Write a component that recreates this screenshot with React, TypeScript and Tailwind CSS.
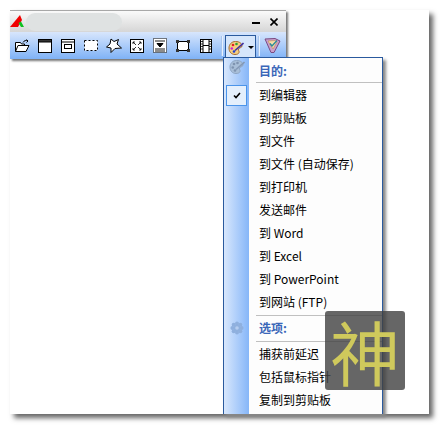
import React from "react";

const font = { fontFamily: '"Noto Sans CJK SC", sans-serif' };

const OpenIcon = () => (
	<svg width="16" height="14" viewBox="0 0 16 14" fill="none" stroke="#000">
		<path d="M1.5 12.5V3.5H6.5L7.5 5H10.5V6.5" fill="#fff" />
		<path d="M1.5 12.5L4 6.5H15L12 12.5Z" fill="#fff" />
		<path d="M9 3.5C10 1.5 12 1 14 2M14 2L12.5 0.5M14 2L12.5 3.5" />
	</svg>
);

const WindowIcon = () => (
	<svg width="14" height="14" viewBox="0 0 14 14" fill="#fff" stroke="#000">
		<rect x="0.5" y="0.5" width="13" height="13" />
		<rect x="0.5" y="0.5" width="13" height="2.5" fill="#333" />
	</svg>
);

const ObjectIcon = () => (
	<svg width="14" height="14" viewBox="0 0 14 14" fill="#fff" stroke="#000">
		<rect x="0.5" y="0.5" width="13" height="13" />
		<path d="M1 3H13" />
		<rect x="3.5" y="5.5" width="7" height="4" />
	</svg>
);

const RegionIcon = () => (
	<svg width="14" height="12" viewBox="0 0 14 12" fill="#fff" stroke="#000">
		<rect x="0.5" y="0.5" width="13" height="10" strokeDasharray="2 2" />
	</svg>
);

const FreeIcon = () => (
	<svg width="16" height="15" viewBox="0 0 16 15" fill="#fff" stroke="#000">
		<path d="M5 1L8 3.5L12.5 1.5L11 6L15.5 10L9 10.5L5 14.5L5 10L0.5 9L4 6Z" />
	</svg>
);

const FullIcon = () => (
	<svg width="14" height="14" viewBox="0 0 14 14" fill="#fff" stroke="#000">
		<rect x="0.5" y="0.5" width="13" height="13" />
		<path d="M3 3L6 6M3 3H5M3 3V5M11 3L8 6M11 3H9M11 3V5M3 11L6 8M3 11H5M3 11V9M11 11L8 8M11 11H9M11 11V9" strokeWidth="0.8" />
	</svg>
);

const ScrollIcon = () => (
	<svg width="14" height="15" viewBox="0 0 14 15" fill="#fff" stroke="#000">
		<rect x="0.5" y="0.5" width="13" height="14" strokeDasharray="1 1" />
		<path d="M2 3H12M2 11H12M2 13H12" strokeWidth="0.9" />
		<path d="M4 5.5H10L7 9Z" fill="#000" />
	</svg>
);

const FixedIcon = () => (
	<svg width="14" height="12" viewBox="0 0 14 12" fill="#fff" stroke="#000">
		<rect x="1.5" y="1.5" width="11" height="9" />
		<path d="M0 0H3V3H0ZM11 0H14V3H11ZM0 9H3V12H0ZM11 9H14V12H11Z" fill="#333" stroke="none" />
	</svg>
);

const FilmIcon = () => (
	<svg width="12" height="14" viewBox="0 0 12 14" fill="#fff" stroke="#000">
		<rect x="0.5" y="0.5" width="11" height="13" />
		<path d="M3 0.5V13.5M9 0.5V13.5M3 6.5H9" />
		<path d="M0.5 2.5H3M0.5 5H3M0.5 7.5H3M0.5 10H3M9 2.5H11.5M9 5H11.5M9 7.5H11.5M9 10H11.5" strokeWidth="0.8" />
	</svg>
);

const PaletteIcon = () => (
	<svg width="16" height="16" viewBox="0 0 16 16">
		<path d="M7.5 1.5C11.5 1.5 14 3.5 14 6C14 8 11 7.5 10.5 9C10 10.5 11.5 11 11 12.5C10.5 14 9 14.5 7 14.5C3.5 14.5 1 12 1 8C1 4.5 3.5 1.5 7.5 1.5Z" fill="#f5cf80" stroke="#a8692c" />
		<circle cx="5" cy="5" r="1.3" fill="#e02020" />
		<circle cx="8.5" cy="4" r="1.3" fill="#30a030" />
		<circle cx="3.8" cy="8.5" r="1.3" fill="#d020d0" />
		<circle cx="6" cy="11.5" r="1.3" fill="#2040d0" />
		<path d="M15.5 3L7 10.5" stroke="#4030a0" strokeWidth="1.6" />
	</svg>
);

const MutedPaletteIcon = () => (
	<svg width="16" height="16" viewBox="0 0 16 16">
		<path d="M7.5 1.5C11.5 1.5 14 3.5 14 6C14 8 11 7.5 10.5 9C10 10.5 11.5 11 11 12.5C10.5 14 9 14.5 7 14.5C3.5 14.5 1 12 1 8C1 4.5 3.5 1.5 7.5 1.5Z" fill="#a9bfd8" stroke="#8ea6c4" />
		<circle cx="5" cy="5" r="1.3" fill="#7f94b0" />
		<circle cx="8.5" cy="4" r="1.3" fill="#7f94b0" />
		<circle cx="3.8" cy="8.5" r="1.3" fill="#7f94b0" />
		<circle cx="6" cy="11.5" r="1.3" fill="#7f94b0" />
		<path d="M15.5 3L7 10.5" stroke="#8499b6" strokeWidth="1.6" />
	</svg>
);

const ClipIcon = () => (
	<svg width="17" height="17" viewBox="0 0 17 17">
		<path d="M1 2L11 1.5L16 4L10 15.5L7 15.5Z" fill="#c9a0cc" stroke="#7a4a80" />
		<path d="M4 4L11 3.5L13 5L9 12Z" fill="#f3dca8" stroke="#c08850" strokeWidth="0.6" />
		<path d="M6 6.5L8 9L13 3.5" fill="none" stroke="#2a8a9a" strokeWidth="1.4" />
	</svg>
);

const GearIcon = () => (
	<svg width="14" height="14" viewBox="0 0 14 14" fill="#8fb0de">
		<circle cx="7" cy="2.4" r="2" />
		<circle cx="7" cy="11.6" r="2" />
		<circle cx="2.4" cy="7" r="2" />
		<circle cx="11.6" cy="7" r="2" />
		<circle cx="3.7" cy="3.7" r="2" />
		<circle cx="10.3" cy="3.7" r="2" />
		<circle cx="3.7" cy="10.3" r="2" />
		<circle cx="10.3" cy="10.3" r="2" />
		<circle cx="7" cy="7" r="3.4" />
		<circle cx="7" cy="7" r="1.8" fill="#b5cdf0" />
	</svg>
);

const Separator = () => <div className="w-px h-[20px] mx-[2px] bg-[#a9c6ee] border-r border-[#e6f0fd] box-content" />;

const tools = [
	<OpenIcon />,
	<WindowIcon />,
	<ObjectIcon />,
	<RegionIcon />,
	<FreeIcon />,
	<FullIcon />,
	<ScrollIcon />,
	<FixedIcon />,
	<FilmIcon />,
];

const Toolbar = () => (
	<div className="w-[276px] shadow-[2px_2px_2px_#777] bg-white">
		<div className="h-[22px] border-t border-[#a8a8a8] bg-gradient-to-b from-[#fafafa] to-[#d6d6d6] flex items-center">
			<svg width="14" height="13" viewBox="0 0 14 13">
				<path d="M0 12L10 0L12 5L8 12Z" fill="#f00000" />
				<path d="M8.5 8L11 6.5L14 12H11Z" fill="#10c020" />
			</svg>
			<div className="ml-[2px] w-[96px] h-[18px] rounded-[9px] bg-[#dfe2e2]" />
			<div className="ml-auto mr-[8px] flex items-center gap-[10px] text-black">
				<div className="w-[8px] h-[2px] bg-black mt-[2px]" />
				<svg width="8" height="8" viewBox="0 0 8 8" stroke="#000" strokeWidth="1.6">
					<path d="M0.5 0.5L7.5 7.5M7.5 0.5L0.5 7.5" />
				</svg>
			</div>
		</div>
		<div className="h-[27px] bg-gradient-to-b from-[#d8e6fc] to-[#7fb2f6] flex items-center">
			{tools.map((icon, i) => (
				<div key={i} className="w-[23px] flex justify-center">
					{icon}
				</div>
			))}
			<div className="ml-[2px]">
				<Separator />
			</div>
			<div className="w-[31px] h-[24px] -mb-[3px] border border-b-0 border-[#2a5a9e] bg-[#d6e6fb] flex items-center justify-center gap-[4px]">
				<PaletteIcon />
				<div className="w-0 h-0 border-x-[3px] border-x-transparent border-t-[3px] border-t-black" />
			</div>
			<Separator />
			<div className="ml-[2px]">
				<ClipIcon />
			</div>
		</div>
	</div>
);

const MenuHeader = ({ label }: { label: string }) => (
	<div className="h-[23px] pl-[10px] flex items-center text-[12px] font-bold text-[#3a66b8]">{label}</div>
);

const MenuLine = () => <div className="h-px ml-[7px] bg-[#c0c0c0]" />;

const MenuItem = ({ label }: { label: string }) => (
	<div className="h-[23px] pl-[10px] flex items-center text-[12px] text-black whitespace-nowrap">{label}</div>
);

const Menu = () => (
	<div
		className="absolute left-[213px] top-[47px] w-[160px] h-[357px] border border-b-0 border-[#2a5a9e] flex bg-[#fdfdfd] shadow-[3px_3px_3px_#888]"
		style={font}
	>
		<div className="w-[25px] bg-gradient-to-r from-[#d8e7fc] to-[#86b6f8] flex flex-col items-center">
			<div className="mt-[1px]">
				<MutedPaletteIcon />
			</div>
			<div className="mt-[10px] w-[21px] h-[21px] border border-[#4a94ea] bg-[#e4effc] flex items-center justify-center">
				<svg width="8" height="7" viewBox="0 0 8 7" fill="none" stroke="#000" strokeWidth="1.6">
					<path d="M1 3.5L3 5.5L7 1" />
				</svg>
			</div>
			<div className="mt-[215px]">
				<GearIcon />
			</div>
		</div>
		<div className="flex-1 pt-[1px]">
			<MenuHeader label="目的:" />
			<MenuLine />
			<MenuItem label="到编辑器" />
			<MenuItem label="到剪贴板" />
			<MenuItem label="到文件" />
			<MenuItem label="到文件 (自动保存)" />
			<MenuItem label="到打印机" />
			<MenuItem label="发送邮件" />
			<MenuItem label="到 Word" />
			<MenuItem label="到 Excel" />
			<MenuItem label="到 PowerPoint" />
			<MenuItem label="到网站 (FTP)" />
			<div className="mt-[2px]">
				<MenuLine />
			</div>
			<MenuHeader label="选项:" />
			<div className="mt-[2px]">
				<MenuLine />
			</div>
			<MenuItem label="捕获前延迟" />
			<MenuItem label="包括鼠标指针" />
			<MenuItem label="复制到剪贴板" />
		</div>
	</div>
);

const App = () => {
	return (
		<div className="w-[440px] h-[425px] bg-white pl-[10px] pt-[10px] overflow-hidden">
			<div className="relative w-[419px] h-[404px] bg-white shadow-[4px_4px_5px_#666]">
				<Toolbar />
				<Menu />
				<div
					className="absolute left-[315px] top-[301px] w-[80px] h-[79px] rounded-[3px] bg-[#404040]/80 flex items-center justify-center text-[70px] leading-none font-normal text-[#cfc95c]"
					style={font}
				>
					神
				</div>
			</div>
		</div>
	);
};

export default App;
